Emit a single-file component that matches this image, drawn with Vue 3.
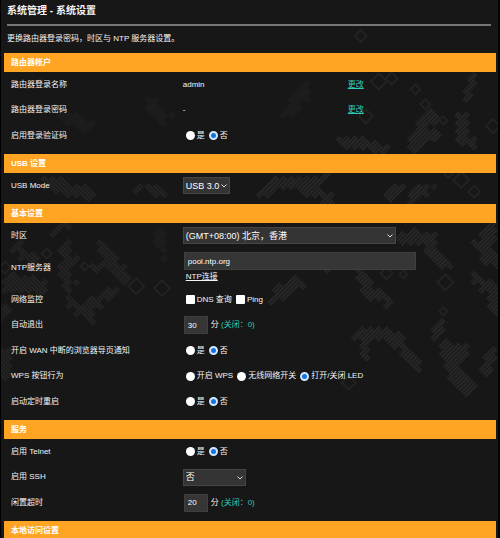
<script setup>
import { reactive } from 'vue'

const form = reactive({
  captcha: 'no',
  usbMode: 'USB 3.0',
  timezone: '(GMT+08:00) 北京，香港',
  ntp: 'pool.ntp.org',
  dns: false,
  ping: false,
  logout: '30',
  wanNotice: 'no',
  wps: 'led',
  reboot: 'no',
  telnet: 'no',
  ssh: '否',
  idle: '20',
})

const yesNo = [
  { value: 'yes', text: '是' },
  { value: 'no', text: '否' },
]
const wpsActions = [
  { value: 'wps', text: '开启 WPS' },
  { value: 'wifi', text: '无线网络开关' },
  { value: 'led', text: '打开/关闭 LED' },
]

const sections = [
  {
    title: '路由器帐户',
    rows: [
      { key: 'name', label: '路由器登录名称', type: 'account', text: 'admin' },
      { key: 'password', label: '路由器登录密码', type: 'account', text: '-' },
      { key: 'captcha', label: '启用登录验证码', type: 'radio', options: yesNo },
    ],
  },
  {
    title: 'USB 设置',
    rows: [{ key: 'usbMode', label: 'USB Mode', type: 'select', size: 'short', options: ['USB 3.0', 'USB 2.0'] }],
  },
  {
    title: '基本设置',
    rows: [
      { key: 'timezone', label: '时区', type: 'select', size: 'long', options: ['(GMT+08:00) 北京，香港'] },
      { key: 'ntp', label: 'NTP服务器', type: 'ntp' },
      { key: 'monitor', label: '网络监控', type: 'checks' },
      { key: 'logout', label: '自动退出', type: 'minutes' },
      { key: 'wanNotice', label: '开启 WAN 中断的浏览器导页通知', type: 'radio', options: yesNo },
      { key: 'wps', label: 'WPS 按钮行为', type: 'radio', options: wpsActions },
      { key: 'reboot', label: '启动定时重启', type: 'radio', options: yesNo },
    ],
  },
  {
    title: '服务',
    rows: [
      { key: 'telnet', label: '启用 Telnet', type: 'radio', options: yesNo },
      { key: 'ssh', label: '启用 SSH', type: 'select', size: 'medium', options: ['否', '是'] },
      { key: 'idle', label: '闲置超时', type: 'minutes' },
    ],
  },
  { title: '本地访问设置', rows: [] },
]

const isField = (row) => ['select', 'ntp', 'minutes'].includes(row.type)

// Camouflage backdrop: each stroke is a polyline thickened into diamond cells.
const STEP = 4
const strokes = [
  { r: 7, tilt: 'faint', pts: [[308, 86], [300, 98], [290, 114]] },
  { r: 4, tilt: 'right', pts: [[475, 80], [473, 88], [470, 98]] },
  { r: 8, tilt: 'right', pts: [[432, 116], [422, 132], [416, 148]] },
  { r: 7, tilt: 'right', pts: [[422, 132], [438, 136]] },
  { r: 6, tilt: 'right', pts: [[463, 118], [464, 132], [474, 146]] },
  { r: 6, tilt: 'right', pts: [[344, 142], [360, 146], [388, 150]] },
  { r: 6, tilt: 'right', pts: [[264, 196], [275, 182], [300, 184], [328, 178]] },
  { r: 6, tilt: 'right', pts: [[304, 184], [330, 202]] },
  { r: 6, tilt: 'right', pts: [[392, 198], [398, 188]] },
  { r: 6, tilt: 'right', pts: [[412, 200], [428, 188]] },
  { r: 7, tilt: 'right', pts: [[402, 240], [430, 236], [432, 254], [444, 264]] },
  { r: 8, tilt: 'right', pts: [[494, 230], [484, 248], [498, 262]] },
  { r: 5, tilt: 'right', pts: [[326, 270], [350, 262]] },
  { r: 7, tilt: 'right', pts: [[362, 274], [370, 296], [388, 300]] },
  { r: 7, tilt: 'right', pts: [[298, 284], [276, 300]] },
  { r: 7, tilt: 'right', pts: [[478, 280], [494, 294], [497, 308]] },
  { r: 7, tilt: 'right', pts: [[362, 338], [380, 334], [400, 344], [418, 366]] },
  { r: 5, tilt: 'right', pts: [[366, 340], [366, 356]] },
  { r: 5, tilt: 'right', pts: [[442, 324], [438, 340]] },
  { r: 8, tilt: 'right', pts: [[448, 350], [462, 352], [452, 370], [468, 392]] },
  { r: 6, tilt: 'right', pts: [[494, 354], [488, 372]] },
  { r: 7, tilt: 'left', pts: [[44, 182], [70, 188], [86, 196]] },
  { r: 5, tilt: 'left', pts: [[140, 188], [160, 192]] },
  { r: 6, tilt: 'left', pts: [[54, 232], [66, 226]] },
  { r: 9, tilt: 'left', pts: [[6, 284], [24, 284], [40, 290]] },
  { r: 7, tilt: 'left', pts: [[18, 250], [30, 262]] },
  { r: 7, tilt: 'left', pts: [[64, 252], [70, 264], [60, 274], [70, 284]] },
  { r: 7, tilt: 'left', pts: [[102, 248], [114, 262], [122, 280]] },
  { r: 6, tilt: 'left', pts: [[96, 270], [114, 266]] },
  { r: 6, tilt: 'left', pts: [[68, 302], [92, 322]] },
  { r: 6, tilt: 'left', pts: [[90, 304], [110, 296]] },
  { r: 7, tilt: 'faint', pts: [[160, 236], [164, 254]] },
  { r: 6, tilt: 'left', pts: [[3, 310], [2, 320]] },
  { r: 8, tilt: 'left', pts: [[3, 354], [4, 374]] },
  { r: 7, tilt: 'faint', pts: [[64, 112], [84, 128]] },
  { r: 7, tilt: 'faint', pts: [[150, 104], [164, 116]] },
]
const outlines = [
  [417, 90, 5], [427, 105, 5], [445, 121, 4], [495, 127, 7], [463, 181, 8], [476, 193, 6], [450, 175, 4],
  [447, 284, 8], [388, 275, 6], [405, 276, 4], [445, 313, 4], [367, 117, 7], [350, 385, 7], [362, 36, 6],
  [380, 82, 8], [393, 79, 6], [46, 255, 5], [84, 268, 4], [136, 288, 8], [162, 290, 8], [4, 269, 6],
]

function near(px, py, [ax, ay], [bx, by]) {
  const dx = bx - ax
  const dy = by - ay
  const t = Math.max(0, Math.min(1, ((px - ax) * dx + (py - ay) * dy) / (dx * dx + dy * dy)))
  return Math.hypot(px - ax - t * dx, py - ay - t * dy)
}

function cells({ r, pts }) {
  let d = ''
  const seen = new Set()
  for (let i = 0; i < pts.length - 1; i++) {
    const [a, b] = [pts[i], pts[i + 1]]
    const x0 = Math.floor((Math.min(a[0], b[0]) - r) / STEP) - 1
    const x1 = Math.ceil((Math.max(a[0], b[0]) + r) / STEP) + 1
    const y0 = Math.floor((Math.min(a[1], b[1]) - r) / STEP) - 1
    const y1 = Math.ceil((Math.max(a[1], b[1]) + r) / STEP) + 1
    for (let x = x0; x <= x1; x++) {
      for (let y = y0; y <= y1; y++) {
        const id = x + ',' + y
        if ((x + y) % 2 || seen.has(id)) continue
        const wobble = ((x * x * 7 + y * y * 3 + x * y * 5) % 6) - 3
        if (near(x * STEP, y * STEP, a, b) > r + wobble) continue
        seen.add(id)
        d += `M${x * STEP} ${y * STEP - STEP}l${STEP} ${STEP}l${-STEP} ${STEP}l${-STEP} ${-STEP}z`
      }
    }
  }
  return d
}

const blobs = strokes.map((s) => ({ d: cells(s), fill: `url(#hatch-${s.tilt})` }))
const rings = outlines.map(([x, y, r]) => `M${x} ${y - r}l${r} ${r}l${-r} ${r}l${-r} ${-r}z`).join('')
</script>

<template>
  <main class="page">
    <svg class="camo" viewBox="0 0 500 538" aria-hidden="true">
      <defs>
        <pattern id="hatch-right" width="3" height="3" patternUnits="userSpaceOnUse" patternTransform="rotate(45)">
          <rect width="3" height="3" fill="#1d1d1d" />
          <rect width="1" height="3" fill="#2c2c2c" />
        </pattern>
        <pattern id="hatch-left" width="3" height="3" patternUnits="userSpaceOnUse" patternTransform="rotate(-45)">
          <rect width="3" height="3" fill="#1c1c1c" />
          <rect width="1" height="3" fill="#282828" />
        </pattern>
        <pattern id="hatch-faint" width="3" height="3" patternUnits="userSpaceOnUse" patternTransform="rotate(45)">
          <rect width="3" height="3" fill="#1b1b1b" />
          <rect width="1" height="3" fill="#1e1e1e" />
        </pattern>
      </defs>
      <path v-for="(blob, i) in blobs" :key="i" :d="blob.d" :fill="blob.fill" />
      <path :d="rings" fill="none" stroke="#222" stroke-width="2" />
    </svg>

    <form class="content" @submit.prevent>
      <header class="head">
        <h1>系统管理 - 系统设置</h1>
        <p>更换路由器登录密码，时区与 NTP 服务器设置。</p>
      </header>

      <section v-for="section in sections" :key="section.title" class="section">
        <h2>{{ section.title }}</h2>
        <div class="rows">
          <div v-for="row in section.rows" :key="row.key" class="row" :class="{ tall: row.type === 'ntp' }">
            <label v-if="isField(row)" class="name" :for="row.key">{{ row.label }}</label>
            <span v-else :id="row.key + '-name'" class="name">{{ row.label }}</span>

            <div v-if="row.type === 'account'" class="account">
              <span>{{ row.text }}</span>
              <a class="change" href="#">更改</a>
            </div>

            <div v-else-if="row.type === 'radio'" class="choices" role="radiogroup" :aria-labelledby="row.key + '-name'">
              <label v-for="option in row.options" :key="option.value">
                <input v-model="form[row.key]" type="radio" :name="row.key" :value="option.value" />
                <span>{{ option.text }}</span>
              </label>
            </div>

            <div v-else-if="row.type === 'select'" class="select" :class="row.size">
              <select :id="row.key" v-model="form[row.key]">
                <option v-for="option in row.options" :key="option">{{ option }}</option>
              </select>
              <svg class="chevron" viewBox="0 0 6 4" aria-hidden="true">
                <path d="M0.5 0.5L3 3L5.5 0.5" fill="none" stroke="#ddd" />
              </svg>
            </div>

            <div v-else-if="row.type === 'ntp'" class="ntp">
              <input id="ntp" v-model="form.ntp" class="box" type="text" />
              <a href="#">NTP连接</a>
            </div>

            <div v-else-if="row.type === 'checks'" class="choices checks" role="group" aria-labelledby="monitor-name">
              <label><input v-model="form.dns" type="checkbox" /><span>DNS 查询</span></label>
              <label><input v-model="form.ping" type="checkbox" /><span>Ping</span></label>
            </div>

            <div v-else class="minutes">
              <input :id="row.key" v-model="form[row.key]" class="box" type="text" />
              <span>分 <em>(关闭：0)</em></span>
            </div>
          </div>
        </div>
      </section>
    </form>
  </main>
</template>

<style>
body {
  margin: 0;
  background: #000;
}
</style>

<style scoped>
.page {
  position: relative;
  height: 100vh;
  box-sizing: border-box;
  margin: 0 2px 0 1px;
  overflow: hidden;
  background: #171717;
  color: #f5f5f5;
  font-family: "Liberation Sans", "Noto Sans CJK SC", sans-serif;
  font-size: 8px;
  line-height: 12px;
}
.camo {
  position: absolute;
  top: 0;
  left: 0;
  width: 100%;
}
.content {
  position: relative;
  padding: 0 2px 0 3px;
}
.head {
  padding: 0 5px 0 3px;
}
h1 {
  margin: 0;
  padding: 3px 0 5px;
  border-bottom: 2px solid #777;
  font-size: 10px;
  line-height: 16px;
}
.head p {
  margin: 0;
  padding: 6px 0 7px;
  font-size: 8px;
  line-height: 14px;
}
h2 {
  margin: 0;
  padding: 0 7px;
  background: #ffa523;
  color: #fff;
  font-size: 8px;
  line-height: 19px;
}
.rows {
  padding-bottom: 6px;
}
.row {
  display: grid;
  grid-template-columns: 35% 1fr;
  align-items: center;
  height: 25px;
  padding-left: 7px;
}
.row:nth-child(even) {
  height: 26px;
}
.row.tall {
  height: 39px;
}
.account {
  display: grid;
  grid-template-columns: 165px 1fr;
  padding-left: 2px;
}
a {
  color: inherit;
  text-decoration: underline;
}
.change,
em {
  color: #2cc9b5;
  font-style: normal;
}
.choices {
  display: flex;
  gap: 4px;
  padding-left: 5px;
}
.choices label {
  display: flex;
  align-items: center;
  gap: 2px;
}
.choices input {
  appearance: none;
  width: 9px;
  height: 9px;
  margin: 0;
  border-radius: 50%;
  background: #fff;
}
.choices input[type="radio"]:checked {
  border: 2px solid #d6e8ff;
  background: #1274e0;
}
.choices.checks input {
  border-radius: 1px;
}
.select {
  position: relative;
  width: 47px;
  margin-left: 2px;
}
.select.medium {
  width: 63px;
}
.select.long {
  width: 213px;
}
select {
  appearance: none;
  display: block;
  width: 100%;
  height: 17px;
  margin: 0;
  padding: 0 2px;
  border: 1px solid #454545;
  border-radius: 0;
  background: #343434;
  color: #fff;
  font: inherit;
  font-size: 9px;
}
.chevron {
  position: absolute;
  top: 7px;
  right: 3px;
  width: 6px;
  height: 4px;
  pointer-events: none;
}
.box {
  box-sizing: border-box;
  height: 18px;
  margin: 0;
  padding: 0 3px;
  border: 1px solid #3f3f3f;
  background: #363636;
  color: #fff;
  font: inherit;
}
.ntp {
  display: flex;
  flex-direction: column;
  align-items: flex-start;
  gap: 1px;
  padding-left: 3px;
}
.ntp .box {
  width: 232px;
}
.ntp a {
  margin-left: 2px;
}
.minutes {
  display: flex;
  align-items: center;
  gap: 3px;
  padding-left: 3px;
}
.minutes .box {
  width: 24px;
}
</style>
